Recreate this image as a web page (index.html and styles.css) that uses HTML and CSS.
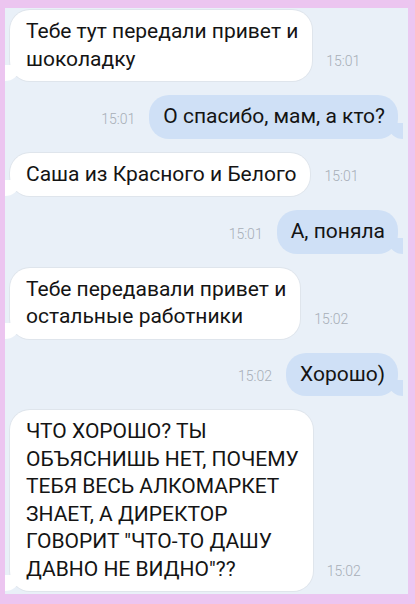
FILE: index.html
```html
<!DOCTYPE html>
<html>
  <head>
    <title>Чат</title>
    <link rel="stylesheet" href="styles.css">
  </head>
  <body>
    <div class="frame">
      <div class="chat">
        <div class="row in">
          <div class="bubble">Тебе тут передали привет и<br>шоколадку</div>
          <span class="time">15:01</span>
        </div>
        <div class="row out">
          <span class="time">15:01</span>
          <div class="bubble">О спасибо, мам, а кто?</div>
        </div>
        <div class="row in">
          <div class="bubble">Саша из Красного и Белого</div>
          <span class="time">15:01</span>
        </div>
        <div class="row out">
          <span class="time">15:01</span>
          <div class="bubble">А, поняла</div>
        </div>
        <div class="row in">
          <div class="bubble">Тебе передавали привет и<br>остальные работники</div>
          <span class="time">15:02</span>
        </div>
        <div class="row out">
          <span class="time">15:02</span>
          <div class="bubble">Хорошо)</div>
        </div>
        <div class="row in">
          <div class="bubble">ЧТО ХОРОШО? ТЫ<br>ОБЪЯСНИШЬ НЕТ, ПОЧЕМУ<br>ТЕБЯ ВЕСЬ АЛКОМАРКЕТ<br>ЗНАЕТ, А ДИРЕКТОР<br>ГОВОРИТ "ЧТО-ТО ДАШУ<br>ДАВНО НЕ ВИДНО"??</div>
          <span class="time">15:02</span>
        </div>
      </div>
    </div>
  </body>
</html>
```
FILE: styles.css
```css
body {
  margin: 0;
  font-family: Roboto, "Liberation Sans", sans-serif;
  background-color: #ecc5f0;
}

.frame {
  width: 415px;
  height: 604px;
  box-sizing: border-box;
  padding: 8px 7px 10px 5px;
  background-color: #ecc5f0;
}

.chat {
  height: 100%;
  box-sizing: border-box;
  background-color: #e9f0f8;
  padding: 2px 10px 0 5px;
  display: flex;
  flex-direction: column;
  gap: 14px;
  overflow: hidden;
}

.row {
  display: flex;
  align-items: flex-end;
}

.row.out {
  justify-content: flex-end;
}

.bubble {
  position: relative;
  white-space: nowrap;
  font-size: 21px;
  line-height: 27.5px;
  color: #141414;
  padding: 8px 14px 8px 16px;
  border-radius: 20px;
}

.row.in .bubble {
  background-color: #ffffff;
  box-shadow: 0 0 0 1px #dfe5ec;
}

.row.out .bubble {
  background-color: #cfe0f6;
  padding: 8px 13px 8px 14px;
}

/* little tails at the bottom corner */
.bubble::before,
.bubble::after {
  content: "";
  position: absolute;
  bottom: 0;
  width: 14px;
  height: 16px;
}

.row.in .bubble::before {
  left: -5px;
  background-color: #ffffff;
  border-bottom-right-radius: 14px 12px;
}

.row.in .bubble::after {
  left: -14px;
  width: 9px;
  background-color: #e9f0f8;
  border-bottom-right-radius: 9px;
}

.row.out .bubble::before {
  right: -5px;
  background-color: #cfe0f6;
  border-bottom-left-radius: 14px 12px;
}

.row.out .bubble::after {
  right: -14px;
  width: 9px;
  background-color: #e9f0f8;
  border-bottom-left-radius: 9px;
}

.time {
  font-size: 14px;
  font-weight: 300;
  color: #a7aeb7;
  margin-bottom: 12px;
}

.row.in .time {
  margin-left: 14px;
}

.row.out .time {
  margin-right: 14px;
}
```
